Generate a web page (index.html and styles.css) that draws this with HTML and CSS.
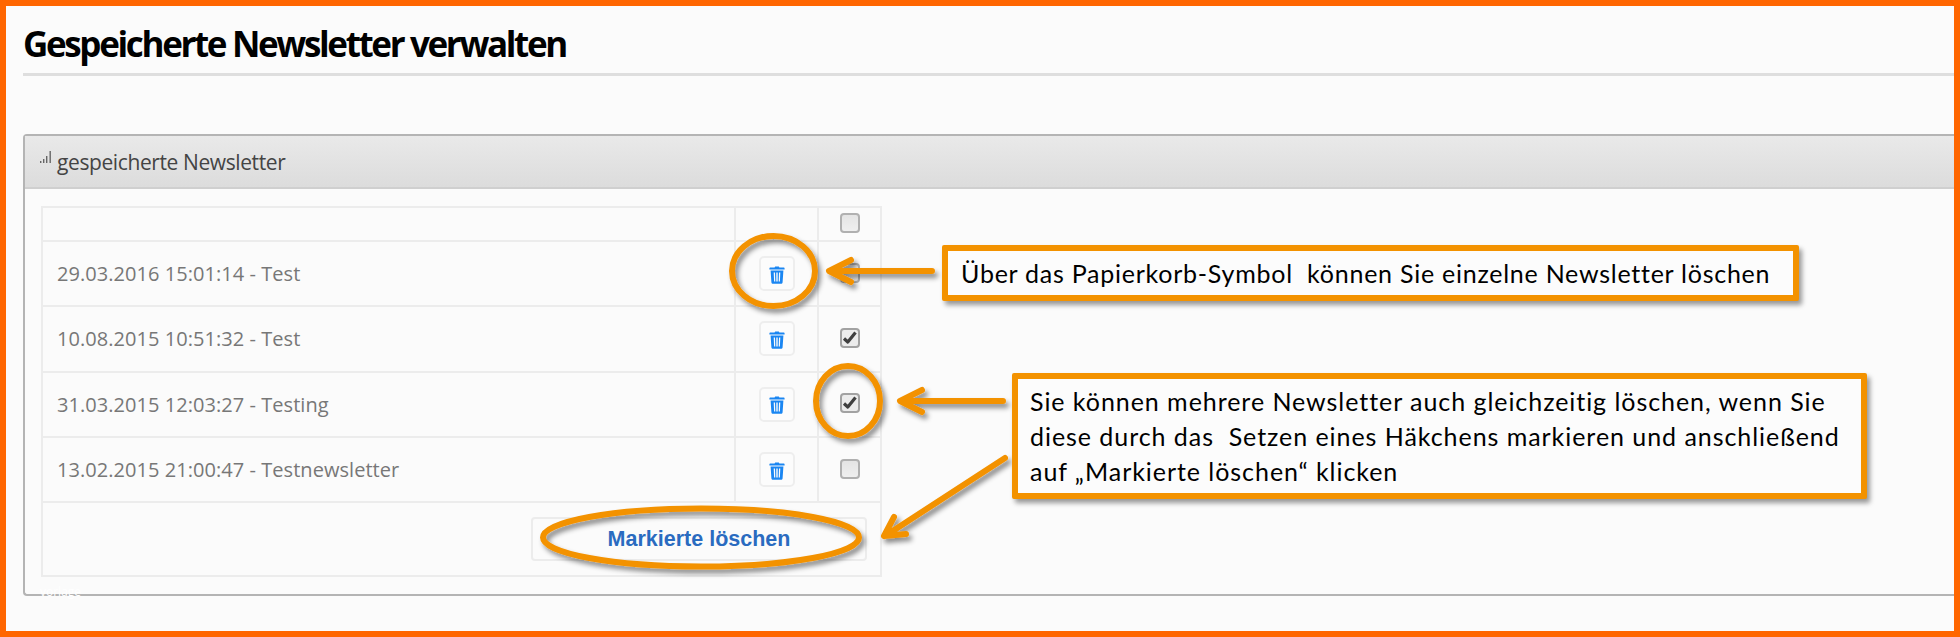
FILE: index.html
```html
<!DOCTYPE html>
<html lang="de">
<head>
  <meta charset="UTF-8" />
  <meta name="viewport" content="width=device-width, initial-scale=1.0"/>
  <title>Gespeicherte Newsletter verwalten</title>
  <link rel="stylesheet" href="styles.css">
</head>
<body>
  <div class="frame">
    <h1>Gespeicherte Newsletter verwalten</h1>

    <div class="panel">
      <div class="panel-head">
        <svg class="bars" width="12" height="12" viewBox="0 0 12 12">
          <rect x="0" y="10" width="1.4" height="2"/>
          <rect x="3" y="8" width="1.4" height="4"/>
          <rect x="6" y="5" width="1.4" height="7"/>
          <rect x="9.5" y="0" width="1.4" height="12"/>
        </svg>
        <span>gespeicherte Newsletter</span>
      </div>
      <div class="panel-body">
        <table class="letters">
          <tr class="row-top">
            <td></td>
            <td></td>
            <td class="cell-check"><input type="checkbox" class="check"></td>
          </tr>
          <tr>
            <td class="cell-name">29.03.2016 15:01:14 - Test</td>
            <td class="cell-del"><button class="del"><svg width="16" height="18" viewBox="0 0 16 18"><use href="#trash"/></svg></button></td>
            <td class="cell-check"><input type="checkbox" class="check"></td>
          </tr>
          <tr>
            <td class="cell-name">10.08.2015 10:51:32 - Test</td>
            <td class="cell-del"><button class="del"><svg width="16" height="18" viewBox="0 0 16 18"><use href="#trash"/></svg></button></td>
            <td class="cell-check"><input type="checkbox" class="check" checked></td>
          </tr>
          <tr>
            <td class="cell-name">31.03.2015 12:03:27 - Testing</td>
            <td class="cell-del"><button class="del"><svg width="16" height="18" viewBox="0 0 16 18"><use href="#trash"/></svg></button></td>
            <td class="cell-check"><input type="checkbox" class="check" checked></td>
          </tr>
          <tr>
            <td class="cell-name">13.02.2015 21:00:47 - Testnewsletter</td>
            <td class="cell-del"><button class="del"><svg width="16" height="18" viewBox="0 0 16 18"><use href="#trash"/></svg></button></td>
            <td class="cell-check"><input type="checkbox" class="check"></td>
          </tr>
          <tr class="row-foot">
            <td colspan="3"><button class="mark">Markierte löschen</button></td>
          </tr>
        </table>
      </div>
    </div>
  </div>

  <svg width="0" height="0" class="defs">
    <symbol id="trash" viewBox="0 0 16 18">
      <path fill="#1a86f2" d="M5.6 1.6 6.2 .4h3.6l.6 1.2h4.4c.5 0 .8.3.8.8v1H.4v-1c0-.5.3-.8.8-.8z"/>
      <path fill="#1a86f2" fill-rule="evenodd" d="M1.6 4.6h12.8l-.8 11.6c-.1 1-.8 1.6-1.7 1.6H4.1c-.9 0-1.6-.6-1.7-1.6zM4.7 6.6l.4 9h1.2l-.3-9zM7.3 6.6v9h1.4v-9zM10 6.6l-.3 9h1.2l.4-9z"/>
    </symbol>
  </svg>

  <!-- annotations drawn over the screenshot -->
  <svg class="marks" width="1960" height="637" viewBox="0 0 1960 637">
    <defs>
      <filter id="drop" x="-20%" y="-20%" width="150%" height="150%">
        <feDropShadow dx="3" dy="4" stdDeviation="2.5" flood-color="#000" flood-opacity="0.45"/>
      </filter>
    </defs>
    <g class="ink" filter="url(#drop)">
      <ellipse cx="773.5" cy="271" rx="41.5" ry="35"/>
      <ellipse cx="848" cy="401" rx="32" ry="35"/>
      <ellipse cx="701" cy="537.5" rx="158" ry="29"/>
      <path d="M932 271H830M851 260 829 271 851 282"/>
      <path d="M1003 401H901M922 390 900 401 922 412"/>
      <path d="M1005 458 885 536M894 517 884 536 906 534"/>
    </g>
  </svg>

  <span class="ghost">vorlage</span>
  <div class="note note-one">Über das Papierkorb-Symbol&nbsp; können Sie einzelne Newsletter löschen</div>
  <div class="note note-two">Sie können mehrere Newsletter auch gleichzeitig löschen, wenn Sie<br>diese durch das &nbsp;Setzen eines Häkchens markieren und anschließend<br>auf „Markierte löschen“ klicken</div>
</body>
</html>
```

FILE: styles.css
```css
html, body {
  margin: 0;
  padding: 0;
}

body {
  width: 1960px;
  height: 637px;
  overflow: hidden;
  position: relative;
  font-family: "Open Sans", sans-serif;
}

.frame {
  box-sizing: border-box;
  width: 1960px;
  height: 637px;
  border: 6px solid #ff6600;
  background: #fbfbfb;
  padding-left: 17px;
}

h1 {
  margin: 0;
  height: 70px;
  box-sizing: border-box;
  border-bottom: 3px solid #dedede;
  padding-top: 15px;
  font-size: 35px;
  line-height: 46px;
  font-weight: 700;
  letter-spacing: -2.35px;
  color: #000;
  white-space: nowrap;
}

.panel {
  margin-top: 58px;
  height: 462px;
  box-sizing: border-box;
  border: 2px solid #b4b4b4;
  border-right: 0;
  border-radius: 4px 0 0 4px;
}

.panel-head {
  display: flex;
  align-items: center;
  height: 53px;
  box-sizing: border-box;
  padding-left: 15px;
  gap: 5px;
  background: linear-gradient(#e9e9e9, #dcdcdc);
  border-bottom: 2px solid #cfcfcf;
  font-size: 21px;
  letter-spacing: -0.4px;
  color: #444;
}

.bars {
  fill: #666;
  margin-top: -10px;
}

.panel-body {
  padding: 17px 0 0 16px;
}

.letters {
  border-collapse: collapse;
  width: 841px;
  table-layout: fixed;
  font-size: 20px;
  letter-spacing: 0.05px;
  color: #777;
}

.letters td {
  border: 2px solid #ececec;
  padding: 0;
  height: 63.3px;
}

.letters .row-top td {
  height: 32px;
}

.letters .row-foot td {
  height: 72px;
  text-align: right;
  padding-right: 13px;
}

.cell-name {
  padding-left: 14px !important;
}

.letters td:nth-child(2) {
  width: 81px;
}

.letters td:nth-child(3) {
  width: 61px;
}

.cell-del, .cell-check {
  text-align: center;
}

.del {
  width: 36px;
  height: 35px;
  padding: 2px 0 0;
  border: 2px solid #eeeeee;
  border-radius: 5px;
  background: #fcfcfc;
  vertical-align: middle;
}

.del svg {
  display: block;
  margin: 0 auto;
}

.check {
  appearance: none;
  display: inline-block;
  width: 20px;
  height: 20px;
  margin: 0 0 5px;
  box-sizing: border-box;
  border: 2px solid #b0b0b0;
  border-radius: 4px;
  background: linear-gradient(#e4e4e4, #efefef);
  vertical-align: middle;
}

.check:checked {
  border-color: #a2a2a2;
  background: url("data:image/svg+xml,%3Csvg xmlns='http://www.w3.org/2000/svg' width='16' height='16'%3E%3Cpath d='M2 8.5 5.8 12 13.5 2.5' fill='none' stroke='%23404040' stroke-width='3.2' stroke-linejoin='round'/%3E%3C/svg%3E") center no-repeat, #ececec;
}

.mark {
  width: 336px;
  height: 44px;
  padding: 0;
  border: 2px solid #ececec;
  border-radius: 4px;
  background: #fbfbfb;
  font-family: "Liberation Sans", sans-serif;
  font-size: 21.5px;
  font-weight: 700;
  color: #2a6bc0;
  vertical-align: middle;
}

.defs {
  position: absolute;
}

.marks {
  position: absolute;
  left: 0;
  top: 0;
}

.ink {
  fill: none;
  stroke: #f39200;
  stroke-width: 6;
  stroke-linecap: round;
  stroke-linejoin: round;
}

.ghost {
  position: absolute;
  left: 40px;
  top: 585px;
  font-size: 12px;
  line-height: 14px;
  color: #fff;
}

.note {
  position: absolute;
  box-sizing: border-box;
  border: 6px solid #f39200;
  border-radius: 2px;
  background: #fcfcfc;
  box-shadow: 3px 4px 5px rgba(0, 0, 0, 0.4);
  font-family: Lato, sans-serif;
  font-size: 25px;
  color: #000;
  white-space: nowrap;
}

.note-one {
  left: 942px;
  top: 245px;
  width: 857px;
  height: 56px;
  padding-left: 13px;
  line-height: 45px;
  letter-spacing: 0.75px;
}

.note-two {
  left: 1012px;
  top: 373px;
  width: 855px;
  height: 126px;
  padding: 5px 0 0 12px;
  line-height: 35px;
  letter-spacing: 0.95px;
}
```
